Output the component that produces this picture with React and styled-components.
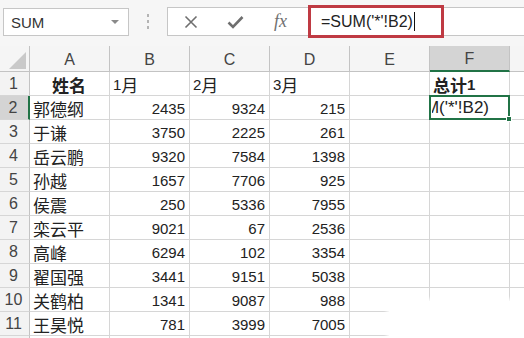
import React from "react";
import styled, { createGlobalStyle } from "styled-components";

const GlobalStyle = createGlobalStyle`
  html, body {
    margin: 0;
    padding: 0;
    background: #ffffff;
    overflow: hidden;
  }
  * {
    box-sizing: border-box;
  }
`;

const GREEN = "#217346";
const GRID = "#d6d6d6";
const HEAD_LINE = "#c3c3c3";

const Page = styled.div`
  position: relative;
  width: 524px;
  height: 338px;
  overflow: hidden;
  background: #ffffff;
  font-family: "Liberation Sans", "Noto Sans CJK SC", sans-serif;
  color: #222;
`;

const Toolbar = styled.div`
  display: flex;
  align-items: flex-start;
  height: 46px;
  padding-top: 7px;
  background: #f6f6f6;
`;

const NameBox = styled.div`
  display: flex;
  align-items: center;
  justify-content: space-between;
  margin: 1px 0 0 3px;
  width: 126px;
  height: 28px;
  padding: 0 9px 0 7px;
  border: 1px solid #c6c6c6;
  background: #fff;
  font-size: 15px;
  color: #333;
`;

const Caret = styled.span`
  width: 0;
  height: 0;
  border-left: 4px solid transparent;
  border-right: 4px solid transparent;
  border-top: 4px solid #8a8a8a;
`;

const Grip = styled.div`
  display: flex;
  flex-direction: column;
  align-items: center;
  justify-content: center;
  gap: 3px;
  width: 38px;
  height: 29px;
`;

const Dot = styled.span`
  width: 2px;
  height: 3px;
  background: #b4b4b4;
`;

const FormulaBar = styled.div`
  display: flex;
  align-items: center;
  flex: 1;
  height: 29px;
  border: 1px solid #c6c6c6;
  border-right: none;
  background: #fff;
`;

const IconButton = styled.div`
  display: flex;
  align-items: center;
  justify-content: center;
  width: 45px;
  height: 100%;
  color: #6f6f6f;
`;

const Fx = styled.span`
  font-family: "Liberation Serif", serif;
  font-style: italic;
  font-size: 18px;
  color: #707070;
`;

const FormulaInput = styled.div`
  display: flex;
  align-items: center;
  flex-shrink: 0;
  margin-left: 5px;
  width: 136px;
  height: 33px;
  padding-left: 10px;
  border: 3px solid #bf3a43;
  font-size: 16px;
  color: #222;
  white-space: nowrap;
`;

const Cursor = styled.span`
  display: inline-block;
  width: 1px;
  height: 19px;
  margin-left: 1px;
  background: #111;
`;

const Sheet = styled.div`
  display: grid;
  grid-template-columns: 30px repeat(7, 80px);
  grid-template-rows: 26px;
  grid-auto-rows: 24px;
`;

const Corner = styled.div`
  position: relative;
  background: #f5f5f5;
  border-right: 1px solid ${HEAD_LINE};
  border-bottom: 1px solid ${HEAD_LINE};
`;

const CornerTriangle = styled.span`
  position: absolute;
  right: 3px;
  bottom: 2px;
  width: 0;
  height: 0;
  border-left: 17px solid transparent;
  border-bottom: 17px solid #c9c9c9;
`;

const ColHead = styled.div`
  display: flex;
  align-items: center;
  justify-content: center;
  padding-top: 2px;
  font-size: 16px;
  color: #444;
  background: ${(p) => (p.$active ? "#d4d4d4" : "#f5f5f5")};
  border-right: 1px solid ${HEAD_LINE};
  border-bottom: ${(p) => (p.$active ? `2px solid ${GREEN}` : `1px solid ${HEAD_LINE}`)};
`;

const RowHead = styled.div`
  display: flex;
  align-items: center;
  justify-content: center;
  padding: 1px 2px 0 0;
  font-size: 16px;
  color: #444;
  background: ${(p) => (p.$active ? "#d4d4d4" : "#f3f3f3")};
  border-right: ${(p) => (p.$active ? `2px solid ${GREEN}` : `1px solid ${HEAD_LINE}`)};
  border-bottom: 1px solid ${GRID};
`;

const Cell = styled.div`
  position: relative;
  display: flex;
  align-items: center;
  justify-content: ${(p) =>
    p.$align === "right" ? "flex-end" : p.$align === "center" ? "center" : "flex-start"};
  padding: 1px 4px 0 3px;
  font-size: 15px;
  font-weight: ${(p) => (p.$bold ? 700 : 400)};
  white-space: nowrap;
  overflow: hidden;
  border-right: 1px solid ${GRID};
  border-bottom: 1px solid ${GRID};
`;

const Han = styled.span`
  font-family: "Noto Sans CJK SC", sans-serif;
  font-size: 17px;
  line-height: 1;
`;

const ActiveCell = styled.div`
  position: relative;
  display: flex;
  align-items: center;
  padding: 1px 0 0 1px;
  margin: -1px 0 0 -1px;
  border: 2px solid ${GREEN};
  font-size: 17px;
  white-space: nowrap;
  z-index: 1;
`;

const EditClip = styled.div`
  display: flex;
  justify-content: flex-end;
  width: 100%;
  padding-right: 19px;
  overflow: hidden;
`;

const FillHandle = styled.span`
  position: absolute;
  right: -4px;
  bottom: -4px;
  width: 6px;
  height: 6px;
  background: ${GREEN};
  border: 1px solid #fff;
`;

const Fade = styled.div`
  position: absolute;
  left: 389px;
  top: 301px;
  right: 0;
  bottom: 0;
  background: #fff;
  box-shadow: 0 0 4px 2px #fff;
`;

const data = [
  ["郭德纲", 2435, 9324, 215],
  ["于谦", 3750, 2225, 261],
  ["岳云鹏", 9320, 7584, 1398],
  ["孙越", 1657, 7706, 925],
  ["侯震", 250, 5336, 7955],
  ["栾云平", 9021, 67, 2536],
  ["高峰", 6294, 102, 3354],
  ["翟国强", 3441, 9151, 5038],
  ["关鹤柏", 1341, 9087, 988],
  ["王昊悦", 781, 3999, 7005],
];

const columns = ["A", "B", "C", "D", "E", "F", ""];

const XIcon = () => (
  <svg width="14" height="14" viewBox="0 0 14 14">
    <path d="M1.5 1.5 L12.5 12.5 M12.5 1.5 L1.5 12.5" stroke="#6f6f6f" strokeWidth="1.6" fill="none" />
  </svg>
);

const CheckIcon = () => (
  <svg width="17" height="14" viewBox="0 0 17 14">
    <path d="M1.5 7.5 L6 12 L15.5 2" stroke="#6f6f6f" strokeWidth="2.6" fill="none" />
  </svg>
);

export default function App() {
  return (
    <Page>
      <GlobalStyle />
      <Toolbar>
        <NameBox>
          SUM
          <Caret />
        </NameBox>
        <Grip>
          <Dot />
          <Dot />
          <Dot />
        </Grip>
        <FormulaBar>
          <IconButton>
            <XIcon />
          </IconButton>
          <IconButton>
            <CheckIcon />
          </IconButton>
          <IconButton>
            <Fx>fx</Fx>
          </IconButton>
          <FormulaInput>
            =SUM('*'!B2)
            <Cursor />
          </FormulaInput>
        </FormulaBar>
      </Toolbar>

      <Sheet>
        <Corner>
          <CornerTriangle />
        </Corner>
        {columns.map((c, i) => (
          <ColHead key={i} $active={c === "F"}>
            {c}
          </ColHead>
        ))}

        <RowHead>1</RowHead>
        <Cell $align="center" $bold>
          <Han>姓名</Han>
        </Cell>
        <Cell>
          1<Han>月</Han>
        </Cell>
        <Cell>
          2<Han>月</Han>
        </Cell>
        <Cell>
          3<Han>月</Han>
        </Cell>
        <Cell />
        <Cell $bold>
          <Han>总计</Han>1
        </Cell>
        <Cell />

        {data.map((row, r) => (
          <React.Fragment key={r}>
            <RowHead $active={r === 0}>{r + 2}</RowHead>
            <Cell>
              <Han>{row[0]}</Han>
            </Cell>
            <Cell $align="right">{row[1]}</Cell>
            <Cell $align="right">{row[2]}</Cell>
            <Cell $align="right">{row[3]}</Cell>
            <Cell />
            {r === 0 ? (
              <ActiveCell>
                <EditClip>=SUM('*'!B2)</EditClip>
                <FillHandle />
              </ActiveCell>
            ) : (
              <Cell />
            )}
            <Cell />
          </React.Fragment>
        ))}

        <RowHead />
        {columns.map((c, i) => (
          <Cell key={i} />
        ))}
      </Sheet>
      <Fade />
    </Page>
  );
}
